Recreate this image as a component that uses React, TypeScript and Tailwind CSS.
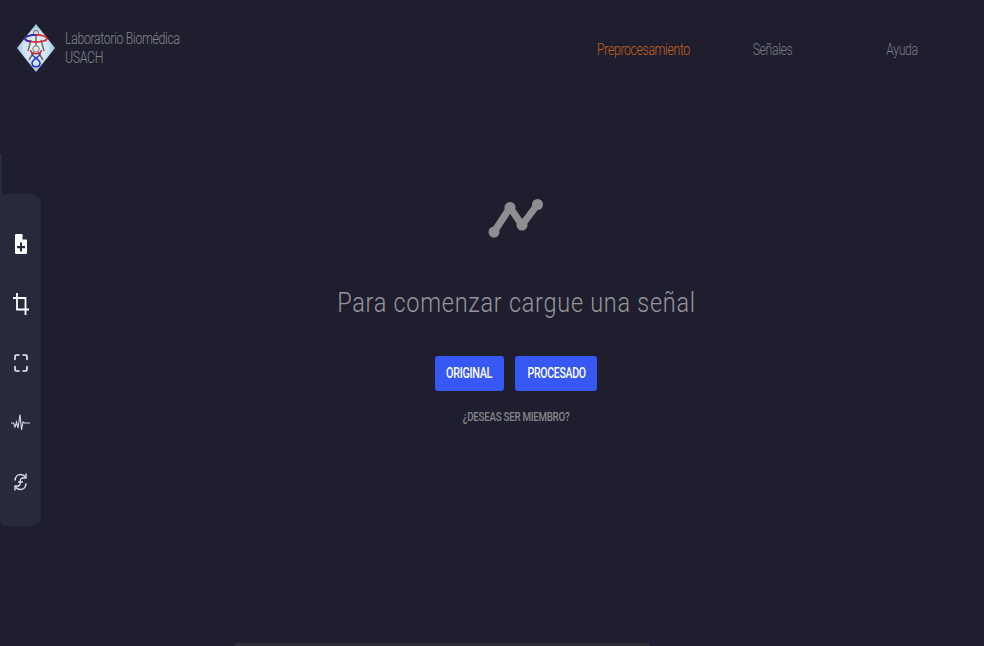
import React from "react";

function Logo() {
  return (
    <svg width="40" height="50" viewBox="0 0 40 50" className="block">
      <defs>
        <radialGradient id="d" cx="0.5" cy="0.5" r="0.6">
          <stop offset="0" stopColor="#eef4f8" />
          <stop offset="0.55" stopColor="#cfe2f0" />
          <stop offset="1" stopColor="#6fa8d2" />
        </radialGradient>
      </defs>
      <polygon points="20,1 39,25 20,49 1,25" fill="url(#d)" />
      <circle cx="20" cy="10" r="2.6" fill="#d8d8dc" stroke="#555" strokeWidth="0.8" />
      <path d="M20 13 L20 26 M15 17 L12 28 M25 17 L28 28 M18 29 L13 37 M22 29 L27 37" stroke="#6b6b70" strokeWidth="1.5" fill="none" />
      <ellipse cx="20" cy="15.5" rx="11" ry="3.6" fill="none" stroke="#d8262c" strokeWidth="1.7" />
      <path d="M9 15.5 A11 3.6 0 0 1 20 11.9" fill="none" stroke="#1f30d0" strokeWidth="1.7" />
      <path d="M9 15.5 A11 3.6 0 0 0 14 18.6" fill="none" stroke="#1f30d0" strokeWidth="1.7" />
      <circle cx="20" cy="26" r="3.2" fill="#e8e8ec" stroke="#666" strokeWidth="0.9" />
      <path d="M16 30 C15 34 24 36 24 40 C24 45 16 45 16 40 C16 36 25 34 24 30" fill="none" stroke="#1f30d0" strokeWidth="1.5" />
      <path d="M14.5 27 C15 32 25 32 25.5 27" fill="none" stroke="#d8262c" strokeWidth="1.5" />
    </svg>
  );
}

function FilePlus() {
  return (
    <svg width="12" height="20" viewBox="0 0 12 20">
      <path fillRule="evenodd" fill="#fff" d="M1.2 0H7L12 6V18.8A1.2 1.2 0 0 1 10.8 20H1.2A1.2 1.2 0 0 1 0 18.8V1.2A1.2 1.2 0 0 1 1.2 0ZM5 8.5V12H2V14.2H5V17.5H7V14.2H10V12H7V8.5Z" />
      <path d="M7.5 0.5V5.5H12Z" fill="#27293d" />
    </svg>
  );
}

function Crop() {
  return (
    <svg width="16" height="22" viewBox="0 0 16 22" fill="none" stroke="#fff" strokeWidth="1.8">
      <path d="M4 0V16.5H16" />
      <path d="M0 5H12.5V22" />
    </svg>
  );
}

function Fullscreen() {
  return (
    <svg width="14" height="18" viewBox="0 0 14 18" fill="none" stroke="#f2f2f4" strokeWidth="1.6" strokeLinecap="round" strokeLinejoin="round">
      <path d="M1 5.5V2.5Q1 1 2.5 1H5M9 1H11.5Q13 1 13 2.5V5.5M13 12.5V15.5Q13 17 11.5 17H9M5 17H2.5Q1 17 1 15.5V12.5" />
    </svg>
  );
}

function Pulse() {
  return (
    <svg width="19" height="20" viewBox="0 0 19 20" fill="none" stroke="#d8d8dc" strokeWidth="1.1">
      <path d="M0 10H2.5L4 14L5.5 9L7 15L9 1.5L10.5 17L12 9L13.5 10H19" />
    </svg>
  );
}

function Sync() {
  return (
    <svg width="13" height="20" viewBox="0 0 13 20" fill="none" stroke="#dcdce0" strokeWidth="1.6">
      <path d="M1 8.5C1.2 5 3.5 2.5 6.5 2.5C8.5 2.5 10 3.3 11.2 4.8" />
      <path d="M12 1.5V6H8" strokeWidth="1.4" />
      <path d="M12 11.5C11.8 15 9.5 17.5 6.5 17.5C4.5 17.5 3 16.7 1.8 15.2" />
      <path d="M1 18.5V14H5" strokeWidth="1.4" />
      <path d="M8.8 6.2C7 5.8 6.2 7 6.3 9.5C6.5 12 6.2 13.5 4 14.2M4 10H9" strokeWidth="1.3" />
    </svg>
  );
}

function Chart() {
  return (
    <svg width="56" height="42" viewBox="0 0 56 42" fill="none" stroke="#8e8e92" strokeWidth="7" strokeLinecap="round" strokeLinejoin="round">
      <path d="M6 34L22 9.5L34 27L49.5 6.5" />
      <circle cx="6" cy="34" r="5.5" fill="#8e8e92" stroke="none" />
      <circle cx="22" cy="9.5" r="5.5" fill="#8e8e92" stroke="none" />
      <circle cx="34" cy="27" r="5.5" fill="#8e8e92" stroke="none" />
      <circle cx="49.5" cy="6.5" r="5.5" fill="#8e8e92" stroke="none" />
    </svg>
  );
}

const tools = [<FilePlus />, <Crop />, <Fullscreen />, <Pulse />, <Sync />];

export default function App() {
  return (
    <div className="relative h-[646px] w-[984px] overflow-hidden bg-[#1e1e2e] font-['Roboto',sans-serif]">
      <header className="flex h-[100px] items-start">
        <div className="flex w-[240px] items-center gap-[9px] pl-[16px] pt-[23px]">
          <Logo />
          <div className="w-[125px] origin-left scale-x-[0.77] text-[16px] leading-[19px] font-light tracking-[-0.45px] text-[#85858b]">
            <div className="whitespace-nowrap">Laboratorio Biomédica</div>
            <div>USACH</div>
          </div>
        </div>
        <nav className="flex pl-[339px] pt-[41px] text-[16.5px] leading-[18px] font-light tracking-[-0.5px]">
          <a className="w-[129px] scale-x-[0.745] text-center whitespace-nowrap text-[#c4611b]">Preprocesamiento</a>
          <a className="w-[129px] scale-x-[0.745] text-center text-[#7c7c85]">Señales</a>
          <a className="w-[130px] scale-x-[0.745] text-center text-[#7c7c85]">Ayuda</a>
        </nav>
      </header>

      <div className="flex">
        <aside className="mt-[94px] w-[41px] shrink-0">
          <div className="flex h-[332px] w-[41px] flex-col items-center gap-[39.5px] rounded-r-[10px] rounded-l-[6px] bg-[#27293d] pt-[40px]">
            {tools.map((t, i) => (
              <div key={i} className="flex h-[20px] items-center justify-center">{t}</div>
            ))}
          </div>
        </aside>

        <main className="flex w-[950px] shrink-0 flex-col items-center pt-[98px]">
          <Chart />
          <h1 className="mt-[46px] scale-x-[0.84] text-[28px] leading-[34px] font-light tracking-[0.85px] whitespace-nowrap text-[#96969b]">Para comenzar cargue una señal</h1>
          <div className="mt-[36px] flex gap-[11px]">
            <button className="h-[35px] w-[69px] rounded-[3px] bg-[#3858f6] text-[15px] font-medium tracking-[-0.4px] text-white">
              <span className="inline-block scale-x-[0.72] whitespace-nowrap">ORIGINAL</span>
            </button>
            <button className="h-[35px] w-[82px] rounded-[3px] bg-[#3858f6] text-[15px] font-medium tracking-[-0.4px] text-white">
              <span className="inline-block scale-x-[0.7] whitespace-nowrap">PROCESADO</span>
            </button>
          </div>
          <p className="mt-[18px] scale-x-[0.75] text-[13px] leading-[16px] font-medium tracking-[-0.35px] whitespace-nowrap text-[#85858b]">¿DESEAS SER MIEMBRO?</p>
        </main>
      </div>

      <div className="absolute left-0 top-[154px] h-[140px] w-[2px] bg-[#2a2c3a]" />
      <div className="absolute bottom-0 left-[235px] h-[3px] w-[415px] bg-[#2e2e34]" />
    </div>
  );
}
